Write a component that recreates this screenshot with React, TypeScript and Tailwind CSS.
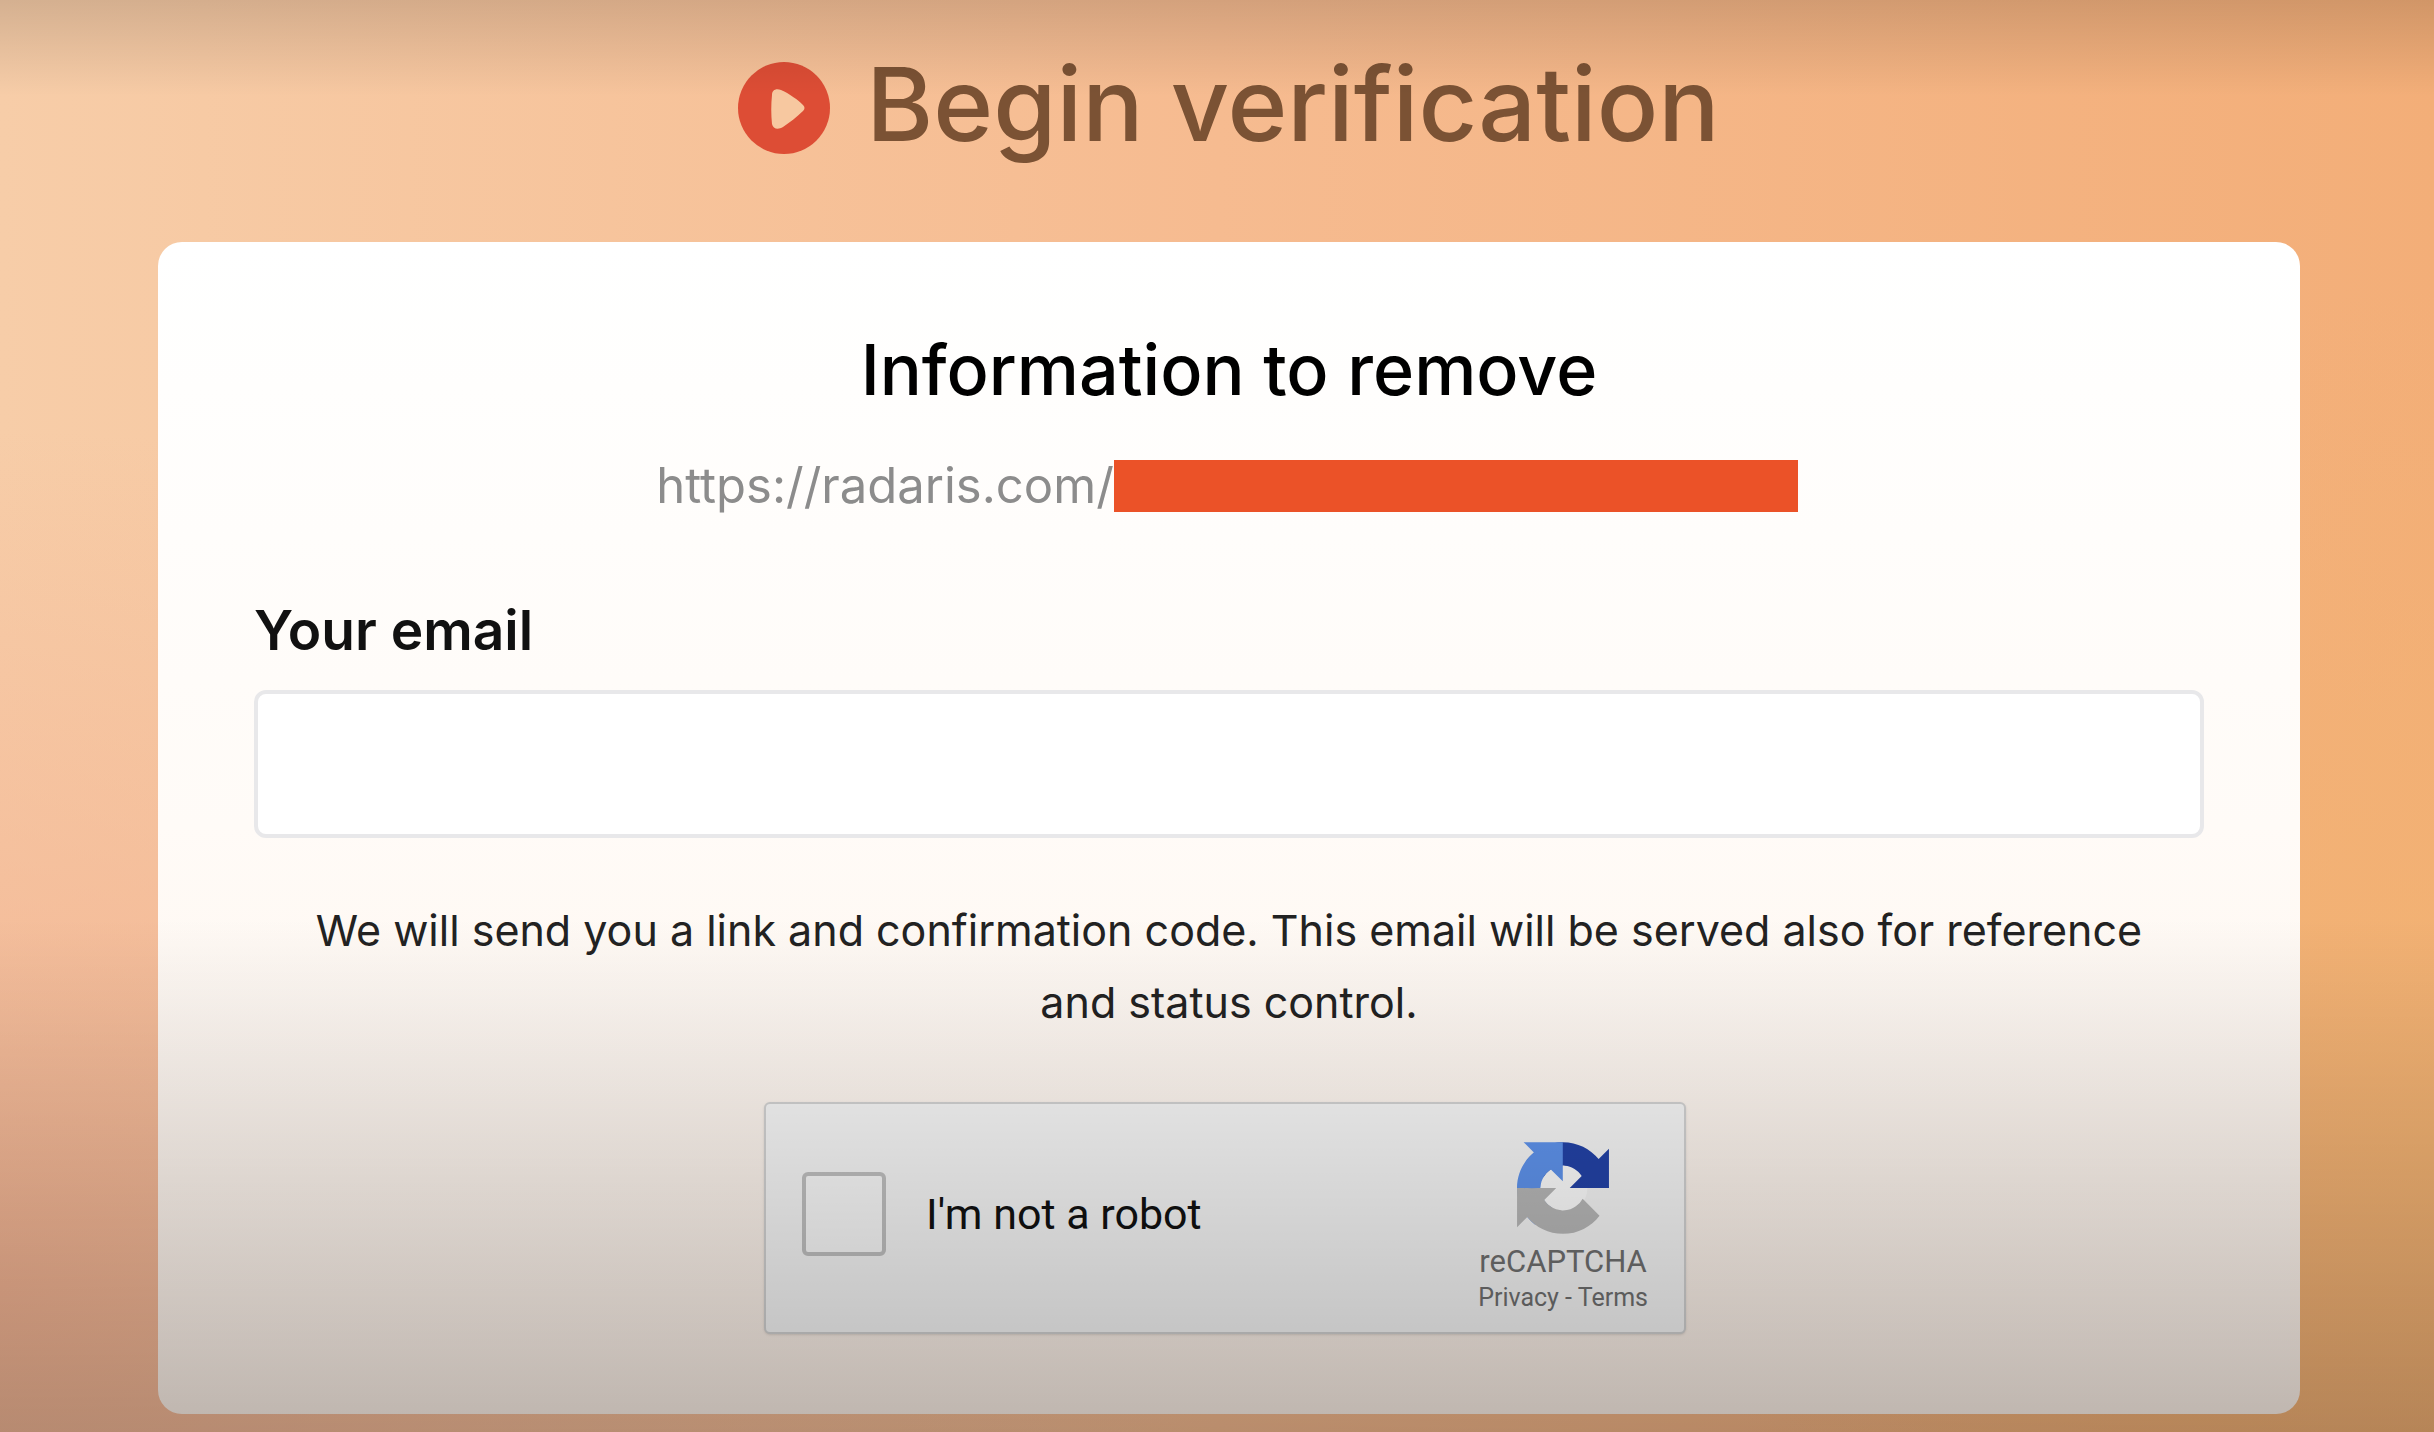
import React from 'react';

function PlayBadge() {
  return (
    <svg viewBox="0 0 92 92" className="size-[92px] shrink-0" aria-hidden="true">
      <circle cx="46" cy="46" r="46" fill="#dd4d35" />
      <path d="M34 33c0-5 4-7 9-5 9 4 17 10 22 15 2 2 2 4 0 6-6 6-13 11-20 16-5 3-10 2-11-3-1-10-1-19 0-29z" fill="#f7c8a0" />
    </svg>
  );
}

function RecaptchaLogo() {
  return (
    <svg viewBox="0 0 64 64" className="size-[92px]" aria-hidden="true">
      <circle cx="32" cy="32" r="17" fill="#ffffff" />
      <path fill="#2343a8" d="M64 31.955l-.033-1.37V4.687l-7.16 7.16C50.948 4.674 42.033.093 32.05.093c-10.4 0-19.622 4.96-25.458 12.64l11.736 11.86a15.55 15.55 0 0 1 4.754-5.334c2.05-1.6 4.952-2.906 8.968-2.906.485 0 .86.057 1.135.163 4.976.393 9.288 3.14 11.828 7.124l-8.307 8.307L64 31.953" />
      <path fill="#5f94ee" d="M31.862.094l-1.37.033H4.594l7.16 7.16C4.58 13.147 0 22.06 0 32.046c0 10.4 4.96 19.622 12.64 25.458L24.5 45.768a15.55 15.55 0 0 1-5.334-4.754c-1.6-2.05-2.906-4.952-2.906-8.968 0-.485.057-.86.163-1.135.393-4.976 3.14-9.288 7.124-11.828l8.307 8.307L31.86.095" />
      <path fill="#b9b9b9" d="M.001 32.045l.033 1.37v25.898l7.16-7.16c5.86 7.173 14.774 11.754 24.76 11.754 10.4 0 19.622-4.96 25.458-12.64l-11.736-11.86a15.55 15.55 0 0 1-4.754 5.334c-2.05 1.6-4.952 2.906-8.968 2.906-.485 0-.86-.057-1.135-.163-4.976-.393-9.288-3.14-11.828-7.124l8.307-8.307c-10.522.04-22.4.066-27.295-.005" />
    </svg>
  );
}

function Recaptcha() {
  return (
    <div className="mx-auto flex h-[232px] w-full max-w-[922px] items-center justify-between rounded-md border-2 border-[#d3d3d3] bg-[#f7f7f7] pl-9 pr-8 font-[Roboto,sans-serif] shadow-sm">
      <div className="flex items-center gap-10 pb-2">
        <input id="robot" type="checkbox" className="size-[84px] appearance-none rounded-md border-4 border-[#c1c1c1] bg-[#fafafa]" />
        <label htmlFor="robot" className="text-[43px] text-[#111]">I'm not a robot</label>
      </div>
      <div className="flex flex-col items-center pt-5 pr-1 text-[#707070]">
        <RecaptchaLogo />
        <span className="mt-2 text-[31px] leading-10">reCAPTCHA</span>
        <span className="text-[25px] leading-8">
          <a href="#privacy">Privacy</a> - <a href="#terms">Terms</a>
        </span>
      </div>
    </div>
  );
}

export default function App() {
  return (
    <div className="relative min-h-screen bg-linear-to-r from-[#f7cda8] via-[#f6bb90] to-[#f3ae78] font-[Inter,sans-serif]">
      <div className="pointer-events-none absolute inset-0 bg-[radial-gradient(ellipse_50%_60%_at_0%_90%,#f3b493,transparent),radial-gradient(ellipse_30%_60%_at_100%_80%,#f2b272,transparent)]" />
      <main className="relative pt-11 pr-[134px] pb-5 pl-[158px]">
        <h1 className="flex items-center justify-center gap-9 text-[102px] leading-30 font-medium text-[#7b5234]">
          <PlayBadge />
          <span className="pb-2">Begin verification</span>
        </h1>
        <form className="mt-[70px] rounded-3xl bg-linear-to-b from-white via-[#fffbf7] to-[#fdf1e8] px-24 pt-20 pb-20">
          <h2 className="text-center text-[70px] leading-24 font-medium text-black">Information to remove</h2>
          <p className="mt-10 flex items-center justify-center pr-1 text-[49px] leading-14 text-[#8c8c8c]">
            https://radaris.com/
            <span className="h-[52px] w-[684px] bg-[#eb5228]" />
          </p>
          <label htmlFor="email" className="mt-21 block text-[55px] leading-16 font-semibold text-[#111]">Your email</label>
          <input id="email" type="email" className="mt-7 block h-[148px] w-full rounded-xl border-4 border-[#e8e8ea] bg-white px-10 text-[49px]" />
          <p className="mt-14 mb-16 px-10 text-center text-[43px] leading-[72px] text-[#222]">
            We will send you a link and confirmation code. This email will be served also for reference and status control.
          </p>
          <div className="pr-2">
            <Recaptcha />
          </div>
        </form>
      </main>
      <div className="pointer-events-none absolute inset-x-0 top-0 h-24 bg-linear-to-b from-black/14 to-transparent" />
      <div className="pointer-events-none absolute inset-0 bg-linear-to-b from-transparent from-64% to-black/25" />
    </div>
  );
}
